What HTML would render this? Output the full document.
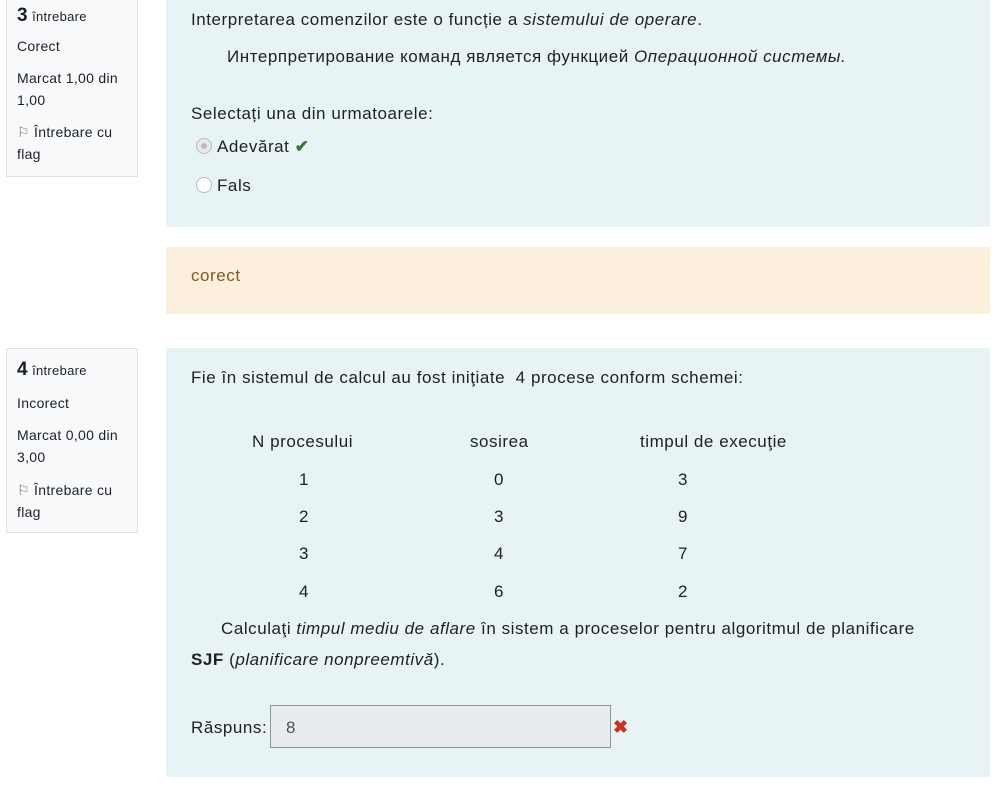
<!DOCTYPE html>
<html><head><meta charset="utf-8"><style>
body{margin:0;width:1002px;height:800px;background:#fff;font-family:"Liberation Sans",sans-serif;color:#1d2125;position:relative;overflow:hidden}
.a{position:absolute;white-space:nowrap}
.info{position:absolute;left:6px;width:130px;background:#f8f9fa;border:1px solid #dee2e6;font-size:14px;color:#1d2125;letter-spacing:.3px}
.c{position:absolute;left:166px;width:824px;background:#e7f3f5}
.t{font-size:17px;letter-spacing:.55px}
.radio{position:absolute;width:16px;height:16px;border:1px solid #bbb;border-radius:50%;background:#fff;box-sizing:border-box}
</style></head><body>
<div class="info" style="top:-2px;height:177px">
<div class="a" style="left:10px;top:6px"><b style="font-size:19px">3</b> <span style="font-size:13px">întrebare</span></div>
<div class="a" style="left:10px;top:39px">Corect</div>
<div class="a" style="left:10px;top:71px">Marcat 1,00 din</div>
<div class="a" style="left:10px;top:93px">1,00</div>
<div class="a" style="left:10px;top:125px"><span style="color:#777">⚐</span> Întrebare cu</div>
<div class="a" style="left:10px;top:147px">flag</div>
</div>
<div class="c" style="top:0;height:227px">
<div class="a t" style="left:25px;top:10px">Interpretarea comenzilor este o funcție a <i>sistemului de operare</i>.</div>
<div class="a t" style="left:61px;top:47px">Интерпретирование команд является функцией <i>Операционной системы.</i></div>
<div class="a t" style="left:25px;top:104px">Selectați una din urmatoarele:</div>
<div class="radio" style="left:30px;top:138px;background:#e9e9e9"><div style="margin:4px;width:6px;height:6px;border-radius:50%;background:#bbb"></div></div>
<div class="a t" style="left:51px;top:137px">Adevărat <span style="color:#357a32;font-weight:bold">✔</span></div>
<div class="radio" style="left:30px;top:177px"></div>
<div class="a t" style="left:51px;top:176px">Fals</div>
</div>
<div class="c" style="top:247px;height:67px;background:#fcefdc">
<div class="a t" style="left:25px;top:19px;color:#7d5a29">corect</div>
</div>
<div class="info" style="top:348px;height:183px">
<div class="a" style="left:10px;top:10px"><b style="font-size:19px">4</b> <span style="font-size:13px">întrebare</span></div>
<div class="a" style="left:10px;top:46px">Incorect</div>
<div class="a" style="left:10px;top:78px">Marcat 0,00 din</div>
<div class="a" style="left:10px;top:100px">3,00</div>
<div class="a" style="left:10px;top:133px"><span style="color:#777">⚐</span> Întrebare cu</div>
<div class="a" style="left:10px;top:155px">flag</div>
</div>
<div class="c" style="top:348px;height:429px">
<div class="a t" style="left:25px;top:20px">Fie în sistemul de calcul au fost iniţiate&nbsp; 4 procese conform schemei:</div>
<div class="a t" style="left:86px;top:84px">N procesului</div>
<div class="a t" style="left:304px;top:84px">sosirea</div>
<div class="a t" style="left:474px;top:84px">timpul de execuţie</div>
<div class="a t" style="left:133px;top:122px">1</div><div class="a t" style="left:328px;top:122px">0</div><div class="a t" style="left:512px;top:122px">3</div>
<div class="a t" style="left:133px;top:159px">2</div><div class="a t" style="left:328px;top:159px">3</div><div class="a t" style="left:512px;top:159px">9</div>
<div class="a t" style="left:133px;top:196px">3</div><div class="a t" style="left:328px;top:196px">4</div><div class="a t" style="left:512px;top:196px">7</div>
<div class="a t" style="left:133px;top:234px">4</div><div class="a t" style="left:328px;top:234px">6</div><div class="a t" style="left:512px;top:234px">2</div>
<div class="a t" style="left:55px;top:271px">Calculaţi <i>timpul mediu de aflare</i> în sistem a proceselor pentru algoritmul de planificare</div>
<div class="a t" style="left:25px;top:302px"><b>SJF</b> (<i>planificare nonpreemtivă</i>).</div>
<div class="a t" style="left:25px;top:370px">Răspuns:</div>
<div style="position:absolute;left:104px;top:357px;width:341px;height:43px;border:1px solid #8f959e;background:#e9ecef;box-sizing:border-box"></div>
<div class="a t" style="left:120px;top:370px;color:#495057">8</div>
<div class="a" style="left:447px;top:369px;color:#ca3120;font-size:18px;font-weight:bold">✖</div>
</div>
</body></html>
